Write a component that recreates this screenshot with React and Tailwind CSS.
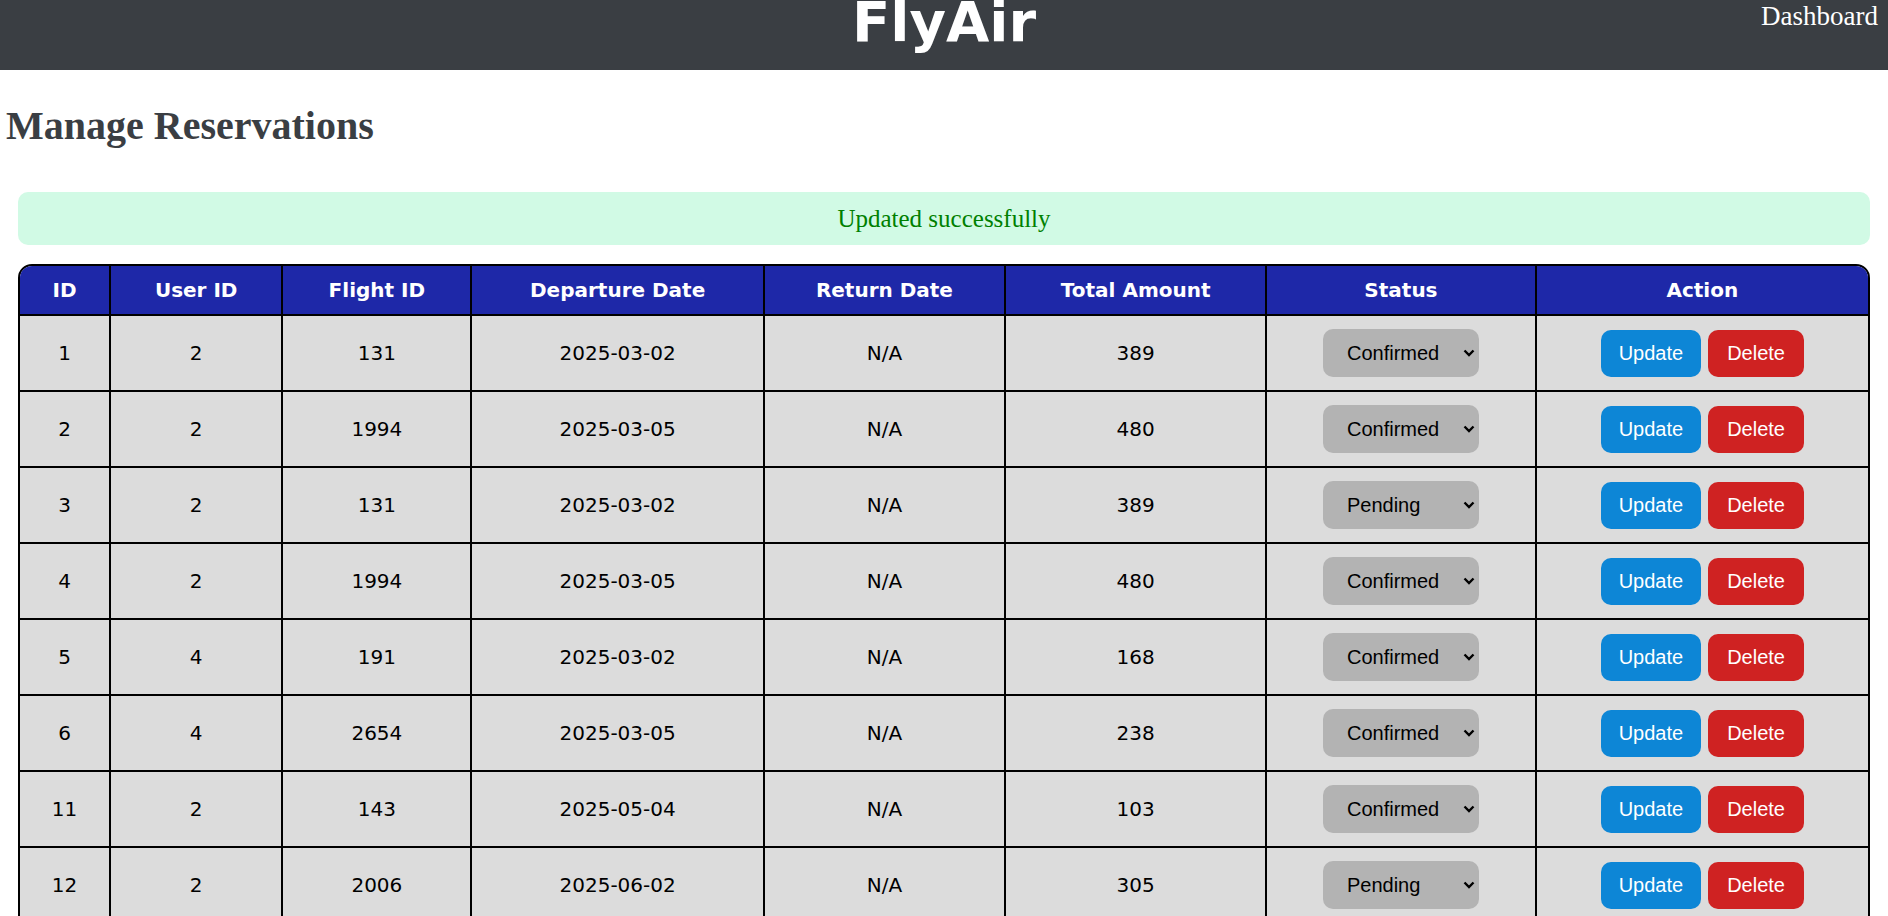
import { useState } from 'react';

const reservations = [
  { id: 1, userId: 2, flightId: 131, departure: '2025-03-02', ret: 'N/A', total: 389, status: 'Confirmed' },
  { id: 2, userId: 2, flightId: 1994, departure: '2025-03-05', ret: 'N/A', total: 480, status: 'Confirmed' },
  { id: 3, userId: 2, flightId: 131, departure: '2025-03-02', ret: 'N/A', total: 389, status: 'Pending' },
  { id: 4, userId: 2, flightId: 1994, departure: '2025-03-05', ret: 'N/A', total: 480, status: 'Confirmed' },
  { id: 5, userId: 4, flightId: 191, departure: '2025-03-02', ret: 'N/A', total: 168, status: 'Confirmed' },
  { id: 6, userId: 4, flightId: 2654, departure: '2025-03-05', ret: 'N/A', total: 238, status: 'Confirmed' },
  { id: 11, userId: 2, flightId: 143, departure: '2025-05-04', ret: 'N/A', total: 103, status: 'Confirmed' },
  { id: 12, userId: 2, flightId: 2006, departure: '2025-06-02', ret: 'N/A', total: 305, status: 'Pending' },
];

const headers = ['ID', 'User ID', 'Flight ID', 'Departure Date', 'Return Date', 'Total Amount', 'Status', 'Action'];
const colWidths = ['w-[91px]', 'w-[172px]', 'w-[189px]', 'w-[292px]', 'w-[241px]', 'w-[261px]', 'w-[269px]', 'w-[331px]'];

function StatusSelect({ value, onChange }) {
  return (
    <div className="relative inline-block">
      <select
        value={value}
        onChange={(e) => onChange(e.target.value)}
        className="appearance-none w-[156px] h-[48px] pl-[24px] pr-[30px] bg-[#b3b3b3] rounded-[10px] text-[20px] text-black font-['Liberation_Sans',Arial,sans-serif] cursor-pointer outline-none"
      >
        <option>Confirmed</option>
        <option>Pending</option>
        <option>Cancelled</option>
      </select>
      {/* chevron */}
      <svg className="absolute right-[4px] top-[20px] w-[12px] h-[8px] pointer-events-none" viewBox="0 0 12 8" fill="none">
        <path d="M1.5 1.5 L6 6 L10.5 1.5" stroke="#000" strokeWidth="2.4" />
      </svg>
    </div>
  );
}

export default function App() {
  const [rows, setRows] = useState(reservations);

  const setStatus = (id, status) => {
    setRows((prev) => prev.map((r) => (r.id === id ? { ...r, status } : r)));
  };

  return (
    <div className="min-h-screen bg-white">
      {/* Top bar */}
      <header className="h-[70px] bg-[#3a3e43] grid grid-cols-[1fr_auto_1fr] overflow-hidden">
        <div />
        <div className="-mt-[6px] text-[56px] leading-[56px] font-bold text-white font-['DejaVu_Sans',Verdana,sans-serif]">
          FlyAir
        </div>
        <div className="flex justify-end items-start pr-[10px] pt-[1px]">
          <a href="#" className="text-[27px] leading-[31px] text-white font-['Liberation_Serif','Times_New_Roman',serif]">
            Dashboard
          </a>
        </div>
      </header>

      <h1 className="mt-[33px] pl-[6px] text-[40px] leading-[46px] font-bold text-[#3a3e43] font-['Liberation_Serif','Times_New_Roman',serif]">
        Manage Reservations
      </h1>

      <div className="mx-[18px] mt-[43px] h-[53px] rounded-[10px] bg-[#d1fae5] flex items-center justify-center text-[25px] text-[#008000] font-['Liberation_Serif','Times_New_Roman',serif]">
        Updated successfully
      </div>

      <div className="mx-[18px] mt-[19px] border-2 border-black rounded-t-[14px] overflow-hidden">
        <table className="w-full table-fixed border-separate border-spacing-0 font-['DejaVu_Sans',Verdana,sans-serif] text-[20px]">
          <colgroup>
            {colWidths.map((w, i) => (
              <col key={i} className={w} />
            ))}
          </colgroup>
          <thead>
            <tr className="h-[50px] bg-[#1e28a8]">
              {headers.map((h, i) => (
                <th
                  key={h}
                  className={`p-0 font-bold text-white text-center border-b-2 border-black ${i < headers.length - 1 ? 'border-r-2' : ''}`}
                >
                  {h}
                </th>
              ))}
            </tr>
          </thead>
          <tbody>
            {rows.map((r) => (
              <tr key={r.id} className="h-[76px] bg-[#dcdcdc] text-black">
                <td className="p-0 text-center border-b-2 border-r-2 border-black">{r.id}</td>
                <td className="p-0 text-center border-b-2 border-r-2 border-black">{r.userId}</td>
                <td className="p-0 text-center border-b-2 border-r-2 border-black">{r.flightId}</td>
                <td className="p-0 text-center border-b-2 border-r-2 border-black">{r.departure}</td>
                <td className="p-0 text-center border-b-2 border-r-2 border-black">{r.ret}</td>
                <td className="p-0 text-center border-b-2 border-r-2 border-black">{r.total}</td>
                <td className="p-0 text-center border-b-2 border-r-2 border-black">
                  <StatusSelect value={r.status} onChange={(v) => setStatus(r.id, v)} />
                </td>
                <td className="p-0 text-center border-b-2 border-black">
                  <div className="flex justify-center gap-[7px] font-['Liberation_Sans',Arial,sans-serif]">
                    <button className="h-[47px] px-[18px] rounded-[10px] bg-[#0d86d6] text-white text-[20px] cursor-pointer">
                      Update
                    </button>
                    <button className="h-[47px] px-[19px] rounded-[10px] bg-[#cf2222] text-white text-[20px] cursor-pointer">
                      Delete
                    </button>
                  </div>
                </td>
              </tr>
            ))}
          </tbody>
        </table>
      </div>
    </div>
  );
}
